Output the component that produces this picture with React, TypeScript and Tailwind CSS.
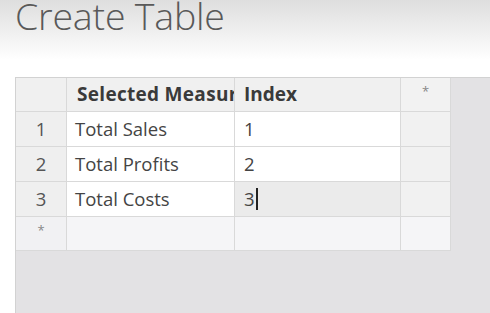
const rows = [
	{ n: "1", name: "Total Sales", index: "1" },
	{ n: "2", name: "Total Profits", index: "2" },
	{ n: "3", name: "Total Costs", index: "3", editing: true },
];

function App() {
	return (
		<div
			className="flex h-[313px] w-[490px] flex-col overflow-hidden bg-white text-[#444]"
			style={{ fontFamily: '"Open Sans", "Noto Sans", sans-serif' }}
		>
			<div className="h-[77px] shrink-0 bg-gradient-to-b from-[#dedede] via-white via-[78%] to-white pl-[15px]">
				<h1 className="text-[37.5px] font-light leading-[32px] tracking-[-0.2px] text-[#595959]">
					Create Table
				</h1>
			</div>

			<div className="ml-[15px] flex-1 border-l border-t border-[#d2d2d2] bg-[#e3e2e4]">
				<div className="grid w-[436px] grid-cols-[51px_168px_166px_50px] grid-rows-[34px_35px_35px_35px_34px] text-[18.5px] leading-[24px]">
					{/* header row */}
					<div className="border-b border-r border-[#d9d9d9] bg-[#f0f0f0]" />
					<div className="overflow-hidden whitespace-nowrap border-b border-r border-[#d9d9d9] bg-[#f0f0f0] pl-[10px] pt-[4px] text-[19px] font-bold tracking-[0.3px] text-[#3a3a3a]">
						Selected Measure
					</div>
					<div className="border-b border-r border-[#d9d9d9] bg-[#f0f0f0] pl-[9px] pt-[4px] text-[19px] font-bold text-[#3a3a3a]">
						Index
					</div>
					<div className="border-b border-r border-[#d9d9d9] bg-[#f2f2f2] pt-[1px] text-center text-[13px] text-[#888]">
						*
					</div>

					{rows.map((r) => (
						<div key={r.n} className="contents">
							<div className="border-b border-r border-[#d9d9d9] bg-[#efefef] pt-[5px] text-center text-[#555]">
								{r.n}
							</div>
							<div className="border-b border-r border-[#d9d9d9] bg-white pl-[8px] pt-[5px]">
								{r.name}
							</div>
							<div
								className={
									r.editing
										? "flex items-start border-b border-r border-[#d9d9d9] bg-[#ebebeb] pl-[9px] pt-[5px]"
										: "border-b border-r border-[#d9d9d9] bg-white pl-[9px] pt-[5px]"
								}
							>
								{r.index}
								{r.editing && (
									<span className="ml-[1px] mt-[1px] h-[22px] w-[2px] bg-[#222]" />
								)}
							</div>
							<div className="border-b border-r border-[#d9d9d9] bg-[#f1f1f1]" />
						</div>
					))}

					{/* new row */}
					<div className="border-b border-r border-[#d9d9d9] bg-[#f1f1f3] pt-[1px] text-center text-[13px] text-[#888]">
						*
					</div>
					<div className="border-b border-r border-[#d9d9d9] bg-[#f5f5f7]" />
					<div className="border-b border-r border-[#d9d9d9] bg-[#f5f5f7]" />
					<div className="border-b border-r border-[#d9d9d9] bg-[#f5f5f7]" />
				</div>
			</div>
		</div>
	);
}

export default App;
